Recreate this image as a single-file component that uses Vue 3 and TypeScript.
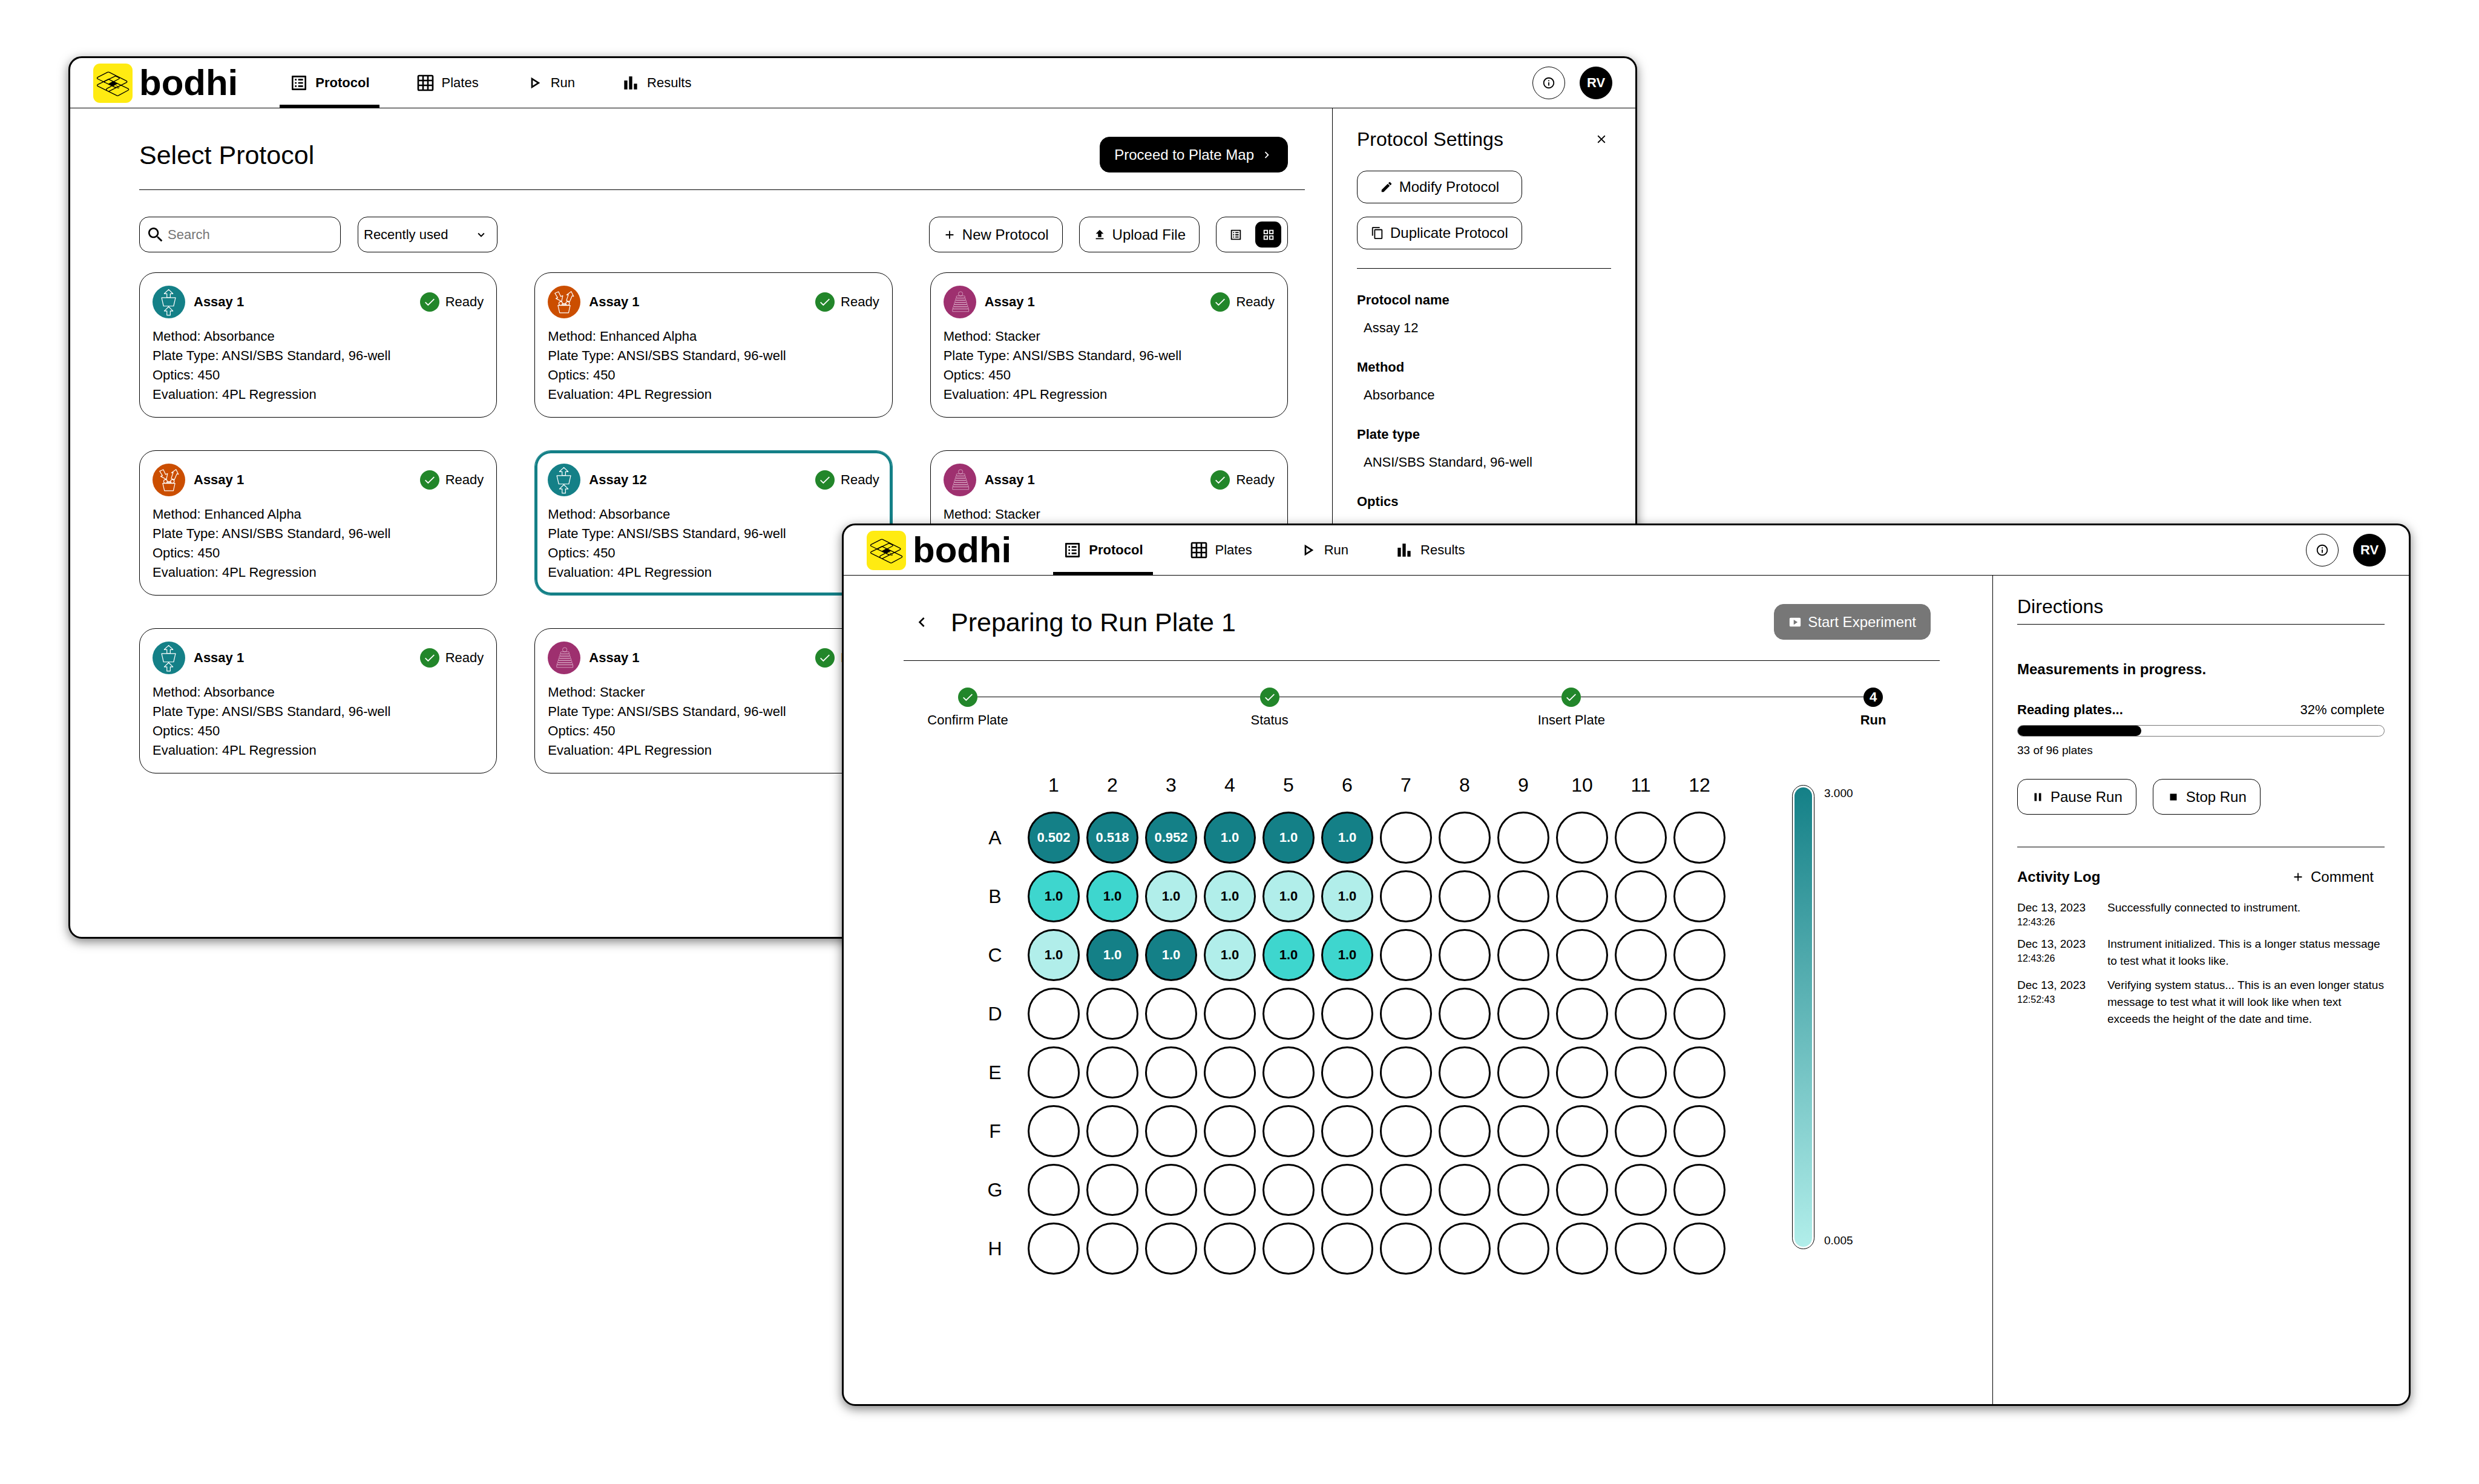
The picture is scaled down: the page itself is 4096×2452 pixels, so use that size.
<script setup lang="ts">
import { ref } from 'vue'

type Method = 'Absorbance' | 'Enhanced Alpha' | 'Stacker'
interface Assay { id: number; name: string; method: Method; details: string[]; selected?: boolean }
interface Well { value: string; tone: 'dark' | 'mid' | 'light' }

const tabs = [
  { label: 'Protocol', icon: 'M19 5v14H5V5h14m1.1-2H3.9c-.5 0-.9.4-.9.9v16.2c0 .4.4.9.9.9h16.2c.4 0 .9-.5.9-.9V3.9c0-.5-.5-.9-.9-.9zM11 7h6v2h-6V7zm0 4h6v2h-6v-2zm0 4h6v2h-6v-2zM7 7h2v2H7V7zm0 4h2v2H7v-2zm0 4h2v2H7v-2z' },
  { label: 'Plates', icon: 'M20 2H4c-1.1 0-2 .9-2 2v16c0 1.1.9 2 2 2h16c1.1 0 2-.9 2-2V4c0-1.1-.9-2-2-2zM8 20H4v-4h4v4zm0-6H4v-4h4v4zm0-6H4V4h4v4zm6 12h-4v-4h4v4zm0-6h-4v-4h4v4zm0-6h-4V4h4v4zm6 12h-4v-4h4v4zm0-6h-4v-4h4v4zm0-6h-4V4h4v4z' },
  { label: 'Run', icon: 'M10 8.64L15.27 12 10 15.36V8.64M8 5v14l11-7L8 5z' },
  { label: 'Results', icon: 'M4 9h4v11H4zM16 13h4v7h-4zM10 4h4v16h-4z' },
]

const icons = {
  list: tabs[0].icon,
  tiles: 'M3 3v8h8V3H3zm6 6H5V5h4v4zm-6 4v8h8v-8H3zm6 6H5v-4h4v4zm4-16v8h8V3h-8zm6 6h-4V5h4v4zm-6 4v8h8v-8h-8zm6 6h-4v-4h4v4z',
  info: 'M11 7h2v2h-2zm0 4h2v6h-2zm1-9C6.48 2 2 6.48 2 12s4.48 10 10 10 10-4.48 10-10S17.52 2 12 2zm0 18c-4.41 0-8-3.59-8-8s3.59-8 8-8 8 3.59 8 8-3.59 8-8 8z',
  right: 'M10 6L8.59 7.41 13.17 12l-4.58 4.59L10 18l6-6z',
  left: 'M15.41 7.41L14 6l-6 6 6 6 1.41-1.41L10.83 12z',
  down: 'M16.59 8.59L12 13.17 7.41 8.59 6 10l6 6 6-6z',
  search: 'M15.5 14h-.79l-.28-.27C15.41 12.59 16 11.11 16 9.5 16 5.91 13.09 3 9.5 3S3 5.91 3 9.5 5.91 16 9.5 16c1.61 0 3.09-.59 4.23-1.57l.27.28v.79l5 4.99L20.49 19l-4.99-5zm-6 0C7.01 14 5 11.99 5 9.5S7.01 5 9.5 5 14 7.01 14 9.5 11.99 14 9.5 14z',
  plus: 'M19 13h-6v6h-2v-6H5v-2h6V5h2v6h6v2z',
  upload: 'M9 16h6v-6h4l-7-7-7 7h4v6zm-4 2h14v2H5v-2z',
  close: 'M19 6.41L17.59 5 12 10.59 6.41 5 5 6.41 10.59 12 5 17.59 6.41 19 12 13.41 17.59 19 19 17.59 13.41 12z',
  edit: 'M3 17.25V21h3.75L17.81 9.94l-3.75-3.75L3 17.25zM20.71 7.04c.39-.39.39-1.02 0-1.41l-2.34-2.34c-.39-.39-1.02-.39-1.41 0l-1.83 1.83 3.75 3.75 1.83-1.83z',
  copy: 'M16 1H4c-1.1 0-2 .9-2 2v14h2V3h12V1zm3 4H8c-1.1 0-2 .9-2 2v14c0 1.1.9 2 2 2h11c1.1 0 2-.9 2-2V7c0-1.1-.9-2-2-2zm0 16H8V7h11v14z',
  start: 'M20 4H4c-1.1 0-2 .9-2 2v12c0 1.1.9 2 2 2h16c1.1 0 2-.9 2-2V6c0-1.1-.9-2-2-2zM9.5 16.5v-9l7 4.5-7 4.5z',
  pause: 'M6 19h4V5H6v14zm8-14v14h4V5h-4z',
  stop: 'M6 6h12v12H6z',
}

const standard = ['Plate Type: ANSI/SBS Standard, 96-well', 'Optics: 450', 'Evaluation: 4PL Regression']

const assays: Assay[] = [
  { id: 1, name: 'Assay 1', method: 'Absorbance', details: standard },
  { id: 2, name: 'Assay 1', method: 'Enhanced Alpha', details: standard },
  { id: 3, name: 'Assay 1', method: 'Stacker', details: standard },
  { id: 4, name: 'Assay 1', method: 'Enhanced Alpha', details: standard },
  { id: 5, name: 'Assay 12', method: 'Absorbance', details: standard, selected: true },
  { id: 6, name: 'Assay 1', method: 'Stacker', details: [] },
  { id: 7, name: 'Assay 1', method: 'Absorbance', details: standard },
  { id: 8, name: 'Assay 1', method: 'Stacker', details: standard },
]

const methodClass: Record<Method, string> = {
  Absorbance: 'teal',
  'Enhanced Alpha': 'orange',
  Stacker: 'plum',
}

// Stacked discs of the Stacker icon, widening towards the base
const discs = [0, 1, 2, 3, 4, 5].map((i) => ({ x: 94 - i * 5, y: 75 + i * 16, width: 63 + i * 10 }))

const settings = [
  { term: 'Protocol name', value: 'Assay 12' },
  { term: 'Method', value: 'Absorbance' },
  { term: 'Plate type', value: 'ANSI/SBS Standard, 96-well' },
  { term: 'Optics', value: '' },
]

const steps = ['Confirm Plate', 'Status', 'Insert Plate', 'Run']
const currentStep = 3

const columns = Array.from({ length: 12 }, (_, i) => i + 1)
const readings: Record<string, Well[]> = {
  A: [
    { value: '0.502', tone: 'dark' }, { value: '0.518', tone: 'dark' }, { value: '0.952', tone: 'dark' },
    { value: '1.0', tone: 'dark' }, { value: '1.0', tone: 'dark' }, { value: '1.0', tone: 'dark' },
  ],
  B: [
    { value: '1.0', tone: 'mid' }, { value: '1.0', tone: 'mid' }, { value: '1.0', tone: 'light' },
    { value: '1.0', tone: 'light' }, { value: '1.0', tone: 'light' }, { value: '1.0', tone: 'light' },
  ],
  C: [
    { value: '1.0', tone: 'light' }, { value: '1.0', tone: 'dark' }, { value: '1.0', tone: 'dark' },
    { value: '1.0', tone: 'light' }, { value: '1.0', tone: 'mid' }, { value: '1.0', tone: 'mid' },
  ],
}
const rows = ['A', 'B', 'C', 'D', 'E', 'F', 'G', 'H']
const well = (row: string, column: number): Well | undefined => readings[row]?.[column - 1]

const log = [
  { date: 'Dec 13, 2023', time: '12:43:26', message: 'Successfully connected to instrument.' },
  { date: 'Dec 13, 2023', time: '12:43:26', message: 'Instrument initialized. This is a longer status message to test what it looks like.' },
  { date: 'Dec 13, 2023', time: '12:52:43', message: 'Verifying system status... This is an even longer status message to test what it will look like when text exceeds the height of the date and time.' },
]

const search = ref('')
const sort = ref('Recently used')
const progress = ref(32)
</script>

<template>
  <div class="desktop">
    <section v-for="screen in ['protocol', 'run']" :key="screen" class="window" :class="screen">
      <header class="topbar">
        <a class="brand" href="#">
          <svg class="mark" viewBox="0 0 288 288" aria-hidden="true">
            <rect width="288" height="288" rx="50" fill="#ffeb12" />
            <g fill="none" stroke="#000" stroke-width="6" stroke-linejoin="round" stroke-linecap="round">
              <path d="M165 177 L34 113 Q24 107 33 100 L105 64 Q111 61 117 64 L243 127 Q252 133 243 139 L115 203" />
              <path d="M163 91 L34 153 Q24 159 34 166 L173 234 Q178 237 184 234 L255 196 Q265 189 255 183 L112 115" />
              <path d="M163 91 L187 102 Q196 107 187 113 L142 137" />
              <path d="M112 115 L84 129 Q76 134 86 139" />
              <path d="M132 167 L102 182 Q92 190 99 195" />
              <path d="M168 162 L186 171 Q193 177 186 181 L160 172" stroke-width="4" />
            </g>
            <path d="M108 149 L146 129 L179 147 L142 168 Z" />
          </svg>
          <span>bodhi</span>
        </a>
        <nav class="tabs">
          <a v-for="(tab, i) in tabs" :key="tab.label" href="#" class="tab" :class="{ active: i === 0 }">
            <svg class="icon lg" viewBox="0 0 24 24" aria-hidden="true"><path :d="tab.icon" fill-rule="evenodd" /></svg>
            <span>{{ tab.label }}</span>
          </a>
        </nav>
        <div class="account">
          <button type="button" class="round" aria-label="Information">
            <svg class="icon" viewBox="0 0 24 24" aria-hidden="true"><path :d="icons.info" /></svg>
          </button>
          <button type="button" class="round filled">RV</button>
        </div>
      </header>

      <div v-if="screen === 'protocol'" class="body">
        <main class="content">
          <div class="heading">
            <h1>Select Protocol</h1>
            <button type="button" class="btn primary">
              Proceed to Plate Map
              <svg class="icon" viewBox="0 0 24 24" aria-hidden="true"><path :d="icons.right" /></svg>
            </button>
          </div>

          <div class="toolbar">
            <label class="search">
              <svg class="icon lg" viewBox="0 0 24 24" aria-hidden="true"><path :d="icons.search" /></svg>
              <input v-model="search" type="search" placeholder="Search" aria-label="Search protocols" />
            </label>
            <label class="sort">
              <select v-model="sort" aria-label="Sort order">
                <option>Recently used</option>
              </select>
              <svg class="icon" viewBox="0 0 24 24" aria-hidden="true"><path :d="icons.down" /></svg>
            </label>
            <div class="actions">
              <button type="button" class="btn">
                <svg class="icon" viewBox="0 0 24 24" aria-hidden="true"><path :d="icons.plus" /></svg>
                New Protocol
              </button>
              <button type="button" class="btn">
                <svg class="icon" viewBox="0 0 24 24" aria-hidden="true"><path :d="icons.upload" /></svg>
                Upload File
              </button>
              <div class="toggle">
                <button type="button" aria-label="List view">
                  <svg class="icon" viewBox="0 0 24 24" aria-hidden="true"><path :d="icons.list" fill-rule="evenodd" /></svg>
                </button>
                <button type="button" class="on" aria-label="Grid view">
                  <svg class="icon" viewBox="0 0 24 24" aria-hidden="true"><path :d="icons.tiles" fill-rule="evenodd" /></svg>
                </button>
              </div>
            </div>
          </div>

          <div class="cards">
            <article v-for="assay in assays" :key="assay.id" class="card" :class="{ selected: assay.selected }">
              <div class="card-head">
                <span class="avatar" :class="methodClass[assay.method]">
                  <svg v-if="assay.method === 'Absorbance'" viewBox="0 0 80 80" aria-hidden="true">
                    <path d="M39.5 9.5L50 19.7H43.5V29H35.2V19.7H28.7ZM22.3 29.6H56.3L51.6 50H27ZM39.5 51.5L50 62H43.5V72.3H35.2V62H28.7Z" />
                  </svg>
                  <svg v-else-if="assay.method === 'Enhanced Alpha'" viewBox="0 0 80 80" aria-hidden="true">
                    <path d="M17.6 18.6L26.4 14.8L32 26.5L36.8 24.5L34 38.4L20 31.3L24.3 29.5ZM57.5 14.3L63.4 26.3L59.8 24.9L53.4 39.5L45.8 36.2L50.5 22L46.3 22.5ZM25 48.3H55L51 66.4H29.3ZM36 44H44.4M36 46.4H44.4" />
                    <circle cx="31.7" cy="43.6" r="4.4" />
                    <circle cx="48.7" cy="43.6" r="4.4" />
                  </svg>
                  <svg v-else viewBox="0 0 240 240" class="fine" aria-hidden="true">
                    <circle cx="125" cy="60" r="16" />
                    <rect v-for="d in discs" :key="d.y" :x="d.x" :y="d.y" :width="d.width" height="16" rx="6" />
                    <rect x="66" y="171" width="119" height="19" />
                  </svg>
                </span>
                <h2>{{ assay.name }}</h2>
                <span class="ready">
                  <svg class="check" viewBox="0 0 48 48" aria-hidden="true"><circle cx="24" cy="24" r="24" /><path d="M13 24.6L20 31.4L35 16.6" /></svg>
                  Ready
                </span>
              </div>
              <ul class="facts">
                <li>Method: {{ assay.method }}</li>
                <li v-for="detail in assay.details" :key="detail">{{ detail }}</li>
              </ul>
            </article>
          </div>
        </main>

        <aside class="side settings">
          <div class="side-title">
            <h2>Protocol Settings</h2>
            <button type="button" class="plain" aria-label="Close">
              <svg class="icon" viewBox="0 0 24 24" aria-hidden="true"><path :d="icons.close" /></svg>
            </button>
          </div>
          <div class="stack">
            <button type="button" class="btn short">
              <svg class="icon" viewBox="0 0 24 24" aria-hidden="true"><path :d="icons.edit" /></svg>
              Modify Protocol
            </button>
            <button type="button" class="btn short">
              <svg class="icon" viewBox="0 0 24 24" aria-hidden="true"><path :d="icons.copy" fill-rule="evenodd" /></svg>
              Duplicate Protocol
            </button>
          </div>
          <dl>
            <div v-for="item in settings" :key="item.term">
              <dt>{{ item.term }}</dt>
              <dd>{{ item.value }}</dd>
            </div>
          </dl>
        </aside>
      </div>

      <div v-else class="body">
        <main class="content">
          <div class="heading">
            <button type="button" class="plain" aria-label="Back">
              <svg class="icon lg" viewBox="0 0 24 24" aria-hidden="true"><path :d="icons.left" /></svg>
            </button>
            <h1>Preparing to Run Plate 1</h1>
            <button type="button" class="btn primary" disabled>
              <svg class="icon" viewBox="0 0 24 24" aria-hidden="true"><path :d="icons.start" fill-rule="evenodd" /></svg>
              Start Experiment
            </button>
          </div>

          <ol class="stepper">
            <template v-for="(step, i) in steps" :key="step">
              <li v-if="i > 0" class="link" aria-hidden="true"></li>
              <li class="step" :class="{ current: i === currentStep }">
                <svg v-if="i < currentStep" class="check" viewBox="0 0 48 48" aria-hidden="true"><circle cx="24" cy="24" r="24" /><path d="M13 24.6L20 31.4L35 16.6" /></svg>
                <span v-else class="number">{{ i + 1 }}</span>
                <span class="step-label">{{ step }}</span>
              </li>
            </template>
          </ol>

          <div class="plate">
            <table>
              <thead>
                <tr>
                  <td></td>
                  <th v-for="c in columns" :key="c" scope="col">{{ c }}</th>
                </tr>
              </thead>
              <tbody>
                <tr v-for="r in rows" :key="r">
                  <th scope="row">{{ r }}</th>
                  <td v-for="c in columns" :key="c">
                    <div class="well" :class="well(r, c)?.tone">{{ well(r, c)?.value }}</div>
                  </td>
                </tr>
              </tbody>
            </table>
            <div class="scale">
              <div class="scale-bar"><div></div></div>
              <div class="scale-labels"><span>3.000</span><span>0.005</span></div>
            </div>
          </div>
        </main>

        <aside class="side directions">
          <div class="side-title">
            <h2>Directions</h2>
          </div>
          <h3 class="status">Measurements in progress.</h3>
          <div class="progress-head">
            <strong>Reading plates...</strong>
            <span>{{ progress }}% complete</span>
          </div>
          <div class="progress" role="progressbar" :aria-valuenow="progress" aria-valuemin="0" aria-valuemax="100" aria-label="Reading plates">
            <div :style="{ width: progress + '%' }"></div>
          </div>
          <p class="count">33 of 96 plates</p>
          <div class="controls">
            <button type="button" class="btn">
              <svg class="icon" viewBox="0 0 24 24" aria-hidden="true"><path :d="icons.pause" /></svg>
              Pause Run
            </button>
            <button type="button" class="btn">
              <svg class="icon" viewBox="0 0 24 24" aria-hidden="true"><path :d="icons.stop" /></svg>
              Stop Run
            </button>
          </div>
          <div class="log-head">
            <h3>Activity Log</h3>
            <button type="button" class="btn text">
              <svg class="icon" viewBox="0 0 24 24" aria-hidden="true"><path :d="icons.plus" /></svg>
              Comment
            </button>
          </div>
          <ul class="log">
            <li v-for="entry in log" :key="entry.message">
              <div class="when">
                <span>{{ entry.date }}</span>
                <small>{{ entry.time }}</small>
              </div>
              <p>{{ entry.message }}</p>
            </li>
          </ul>
        </aside>
      </div>
    </section>
  </div>
</template>

<style>
body {
  margin: 0;
  background: #fff;
}
</style>

<style scoped>
* {
  box-sizing: border-box;
}

.desktop {
  display: grid;
  align-items: start;
  padding: 93px 113px 129px;
  font-family: "Liberation Sans", Arial, sans-serif;
  font-size: 22px;
  line-height: 32px;
  color: #000;
}

h1, h2, h3, p, ul, ol, dl, dd {
  margin: 0;
  padding: 0;
}

ul, ol {
  list-style: none;
}

button, input, select {
  font: inherit;
  color: inherit;
  margin: 0;
}

button {
  cursor: pointer;
}

.icon {
  display: block;
  flex: none;
  width: 22px;
  height: 22px;
  fill: currentColor;
}

.icon.lg {
  width: 32px;
  height: 32px;
}

/* Overlapping windows share one grid cell */
.window {
  grid-area: 1 / 1;
  display: flex;
  flex-direction: column;
  width: calc(100% - 1278px);
  aspect-ratio: 16 / 9;
  overflow: hidden;
  border: 3px solid #000;
  border-radius: 22px;
  background: #fff;
  box-shadow: 0 5px 17px rgba(0, 0, 0, 0.5);
}

.window.run {
  justify-self: end;
  margin-top: 772px;
}

.topbar {
  display: flex;
  align-items: center;
  height: 83px;
  padding: 0 38px;
  border-bottom: 1px solid #000;
}

.brand {
  display: flex;
  align-items: center;
  gap: 11px;
  color: #000;
  font-size: 60px;
  font-weight: 700;
  text-decoration: none;
}

.mark {
  display: block;
  width: 65px;
  height: 65px;
}

.tabs {
  display: flex;
  gap: 44px;
  height: 100%;
  margin-left: 69px;
}

.tab {
  display: flex;
  align-items: center;
  gap: 11px;
  padding: 0 16px;
  border: 0 solid transparent;
  border-width: 5px 0;
  color: #000;
  text-decoration: none;
}

.tab.active {
  border-bottom-color: #000;
  font-weight: 700;
}

.account {
  display: flex;
  gap: 24px;
  margin-left: auto;
}

.round {
  display: flex;
  align-items: center;
  justify-content: center;
  width: 54px;
  height: 54px;
  padding: 0;
  border: 1px solid #000;
  border-radius: 50%;
  background: #fff;
}

.round.filled {
  background: #000;
  color: #fff;
  font-weight: 700;
}

.body {
  display: flex;
  flex: 1;
}

.content {
  flex: 1;
  min-width: 0;
  padding: 47px 45px 0 114px;
}

.run .content {
  padding: 47px 87px 0 99px;
}

.heading {
  display: flex;
  align-items: center;
  padding: 0 28px 28px 0;
  border-bottom: 1px solid #000;
}

.run .heading {
  padding: 0 15px 34px 14px;
}

h1 {
  font-size: 43px;
  font-weight: 400;
}

.run h1 {
  margin-left: 32px;
}

.btn {
  display: flex;
  align-items: center;
  justify-content: center;
  gap: 10px;
  height: 59px;
  padding: 0 22px;
  border: 1px solid #000;
  border-radius: 16px;
  background: #fff;
  font-size: 24px;
  white-space: nowrap;
}

.btn.primary {
  margin-left: auto;
  padding: 0 23px;
  background: #000;
  color: #fff;
}

.btn.primary:disabled {
  border-color: #777;
  background: #777;
}

.btn.short {
  height: 54px;
}

.btn.text {
  height: 54px;
  padding: 0 17px;
  border-color: transparent;
}

.plain {
  display: flex;
  align-items: center;
  justify-content: center;
  width: 32px;
  height: 32px;
  padding: 0;
  border: 0;
  background: none;
}

.toolbar {
  display: flex;
  gap: 28px;
  margin-top: 44px;
  padding-right: 28px;
}

.search {
  display: flex;
  align-items: center;
  gap: 4px;
  width: 333px;
  height: 59px;
  padding: 0 10px;
  border: 1px solid #000;
  border-radius: 16px;
}

.search input {
  flex: 1;
  min-width: 0;
  padding: 0;
  border: 0;
  outline: 0;
  background: none;
}

.search input::placeholder {
  color: #757575;
  opacity: 1;
}

.sort {
  display: grid;
  align-items: center;
  width: 231px;
  height: 59px;
}

.sort select {
  grid-area: 1 / 1;
  width: 100%;
  height: 100%;
  padding: 0 16px 0 9px;
  border: 1px solid #000;
  border-radius: 16px;
  appearance: none;
  background: #fff;
}

.sort .icon {
  grid-area: 1 / 1;
  justify-self: end;
  margin-right: 16px;
  pointer-events: none;
}

.actions {
  display: flex;
  gap: 27px;
  margin-left: auto;
}

.toggle {
  display: flex;
  align-items: center;
  justify-content: space-between;
  width: 119px;
  padding: 0 10px;
  border: 1px solid #000;
  border-radius: 16px;
}

.toggle button {
  display: flex;
  align-items: center;
  justify-content: center;
  width: 43px;
  height: 43px;
  padding: 0;
  border: 0;
  border-radius: 11px;
  background: none;
}

.toggle .on {
  background: #000;
  color: #fff;
}

.cards {
  display: grid;
  grid-template-columns: repeat(3, 1fr);
  gap: 54px 62px;
  margin-top: 33px;
  padding-right: 28px;
}

.card {
  padding: 21px;
  border: 1px solid #000;
  border-radius: 27px;
}

.card.selected {
  border-color: #148087;
  box-shadow: inset 0 0 0 4px #148087;
}

.card-head {
  display: flex;
  align-items: center;
}

.card h2 {
  margin-left: 14px;
  font-size: 22px;
}

.avatar {
  width: 54px;
  height: 54px;
  border-radius: 50%;
}

.avatar svg {
  display: block;
  fill: none;
  stroke: #fff;
  stroke-width: 1.8;
  stroke-linejoin: round;
}

.avatar .fine {
  stroke: #e8c8db;
  stroke-width: 3;
}

.teal {
  background: #148087;
}

.orange {
  background: #cb4e00;
}

.plum {
  background: #9e306f;
}

.ready {
  display: flex;
  align-items: center;
  gap: 10px;
  margin-left: auto;
}

.check {
  display: block;
  width: 32px;
  height: 32px;
  fill: #22862a;
}

.check path {
  fill: none;
  stroke: #fff;
  stroke-width: 2.6;
}

.facts {
  margin-top: 14px;
}

.side {
  border-left: 1px solid #000;
}

.settings {
  width: 501px;
  padding: 31px 40px 0;
}

.directions {
  width: 688px;
  padding: 31px 40px 0;
}

.side-title {
  display: flex;
  align-items: center;
  justify-content: space-between;
}

.side-title h2 {
  font-size: 32px;
  font-weight: 400;
  line-height: 40px;
}

.directions .side-title {
  padding-bottom: 9px;
  border-bottom: 1px solid #000;
}

.stack {
  display: grid;
  gap: 22px;
  justify-content: start;
  margin-top: 32px;
}

.settings dl {
  display: grid;
  gap: 33px;
  margin-top: 31px;
  padding-top: 36px;
  border-top: 1px solid #000;
}

dt {
  font-weight: 700;
}

dd {
  margin-top: 14px;
  padding-left: 11px;
}

.stepper {
  display: flex;
  margin-top: 44px;
  padding: 0 94px 0 90px;
}

.step {
  display: flex;
  flex-direction: column;
  align-items: center;
  gap: 6px;
  width: 32px;
  white-space: nowrap;
}

.link {
  flex: 1;
  height: 1px;
  margin-top: 15px;
  background: #000;
}

.number {
  width: 32px;
  height: 32px;
  border-radius: 50%;
  background: #000;
  color: #fff;
  font-weight: 700;
  text-align: center;
}

.current .step-label {
  font-weight: 700;
}

.plate {
  display: flex;
  gap: 99px;
  margin-top: 47px;
  padding-left: 97px;
}

table {
  border-collapse: separate;
  border-spacing: 11px;
}

th, td {
  min-width: 86px;
  padding: 0;
  text-align: center;
}

th {
  font-size: 32px;
  font-weight: 400;
}

thead th {
  height: 66px;
}

.well {
  display: flex;
  align-items: center;
  justify-content: center;
  width: 86px;
  height: 86px;
  border: 3px solid #000;
  border-radius: 50%;
  font-weight: 700;
}

.well.dark {
  background: #148087;
  color: #fff;
}

.well.mid {
  background: #3ed6ce;
}

.well.light {
  background: #b1eeea;
}

.scale {
  display: flex;
  gap: 16px;
  margin: 44px 0 53px;
}

.scale-bar {
  width: 37px;
  padding: 3px;
  border: 1px solid #000;
  border-radius: 19px;
}

.scale-bar div {
  height: 100%;
  border-radius: 15px;
  background: linear-gradient(#148087, #b1eeea);
}

.scale-labels {
  display: flex;
  flex-direction: column;
  justify-content: space-between;
  font-size: 19px;
  line-height: 28px;
}

h3 {
  font-size: 24px;
}

.status {
  margin-top: 58px;
}

.progress-head {
  display: flex;
  justify-content: space-between;
  margin-top: 35px;
}

.progress {
  height: 19px;
  margin-top: 9px;
  border: 1px solid #777;
  border-radius: 10px;
}

.progress div {
  box-sizing: content-box;
  height: 100%;
  padding-right: 10px;
  border-radius: 9px;
  background: #000;
}

.count {
  margin-top: 9px;
  font-size: 19px;
  line-height: 28px;
}

.controls {
  display: flex;
  gap: 27px;
  margin-top: 33px;
}

.log-head {
  display: flex;
  align-items: center;
  justify-content: space-between;
  margin-top: 53px;
  padding-top: 22px;
  border-top: 1px solid #000;
}

.log {
  display: grid;
  gap: 12px;
  margin-top: 10px;
  font-size: 19px;
  line-height: 28px;
}

.log li {
  display: grid;
  grid-template-columns: 149px 1fr;
}

.when {
  display: flex;
  flex-direction: column;
}

.when small {
  font-size: 16px;
  line-height: 20px;
}
</style>
